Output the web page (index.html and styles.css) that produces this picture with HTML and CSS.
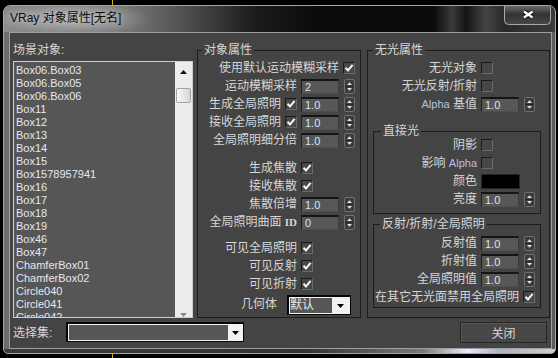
FILE: index.html
```html
<!DOCTYPE html>
<html lang="zh-CN">
<head>
<meta charset="utf-8">
<title>VRay 对象属性</title>
<link rel="stylesheet" href="styles.css">
</head>
<body>
<div class="window">
  <div class="titlebar">
    <span class="title">VRay 对象属性[无名]</span>
    <div class="close-x">
      <svg width="47" height="19" viewBox="0 0 47 19">
        <defs>
          <linearGradient id="cg" x1="0" y1="0" x2="0" y2="1">
            <stop offset="0" stop-color="#6a6a6a"/>
            <stop offset="0.45" stop-color="#333"/>
            <stop offset="1" stop-color="#474747"/>
          </linearGradient>
        </defs>
        <path d="M0.5 0 V14.5 A4 4 0 0 0 4.5 18.5 H42.5 A4 4 0 0 0 46.5 14.5 V0" fill="url(#cg)" stroke="#a8a8a8"/>
        <path d="M20 5.5 L28.5 11.5 M28.5 5.5 L20 11.5" stroke="#151515" stroke-width="4.2"/>
        <path d="M20 5.5 L28.5 11.5 M28.5 5.5 L20 11.5" stroke="#fff" stroke-width="2.2"/>
      </svg>
    </div>
  </div>
  <div class="client">
    <div class="main">
      <div class="scene">
        <div class="scene-label">场景对象:</div>
        <div class="listbox">
          <ul class="items">
            <li>Box06.Box03</li>
            <li>Box06.Box05</li>
            <li>Box06.Box06</li>
            <li>Box11</li>
            <li>Box12</li>
            <li>Box13</li>
            <li>Box14</li>
            <li>Box15</li>
            <li>Box1578957941</li>
            <li>Box16</li>
            <li>Box17</li>
            <li>Box18</li>
            <li>Box19</li>
            <li>Box46</li>
            <li>Box47</li>
            <li>ChamferBox01</li>
            <li>ChamferBox02</li>
            <li>Circle040</li>
            <li>Circle041</li>
            <li>Circle042</li>
          </ul>
          <div class="vscroll">
            <svg class="sc-up" width="7" height="4" viewBox="0 0 7 4"><path d="M0 4 H7 L3.5 0 Z" fill="#111"/></svg>
            <div class="thumb"></div>
            <svg class="sc-down" width="7" height="4" viewBox="0 0 7 4"><path d="M0 0 H7 L3.5 4 Z" fill="#8a8a8a"/></svg>
          </div>
        </div>
      </div>

      <fieldset class="group obj">
        <legend>对象属性</legend>
        <div class="rows">
          <span class="lbl to-c">使用默认运动模糊采样</span>
          <span class="cb col-c"><svg width="10" height="10" viewBox="0 0 10 10"><path d="M1.5 4.8 L4 7.5 L8.6 1.8" fill="none" stroke="#f4f4f4" stroke-width="2"/></svg></span>

          <span class="lbl to-b">运动模糊采样</span>
          <span class="field col-b">2</span>
          <span class="spin col-c"><svg width="11" height="15" viewBox="0 0 11 15"><rect x="0.5" y="0.5" width="10" height="14" rx="1.5" fill="#3c3c3c" stroke="#707070"/><path d="M1 7.5 H10" stroke="#262626"/><path d="M3 6 H8 L5.5 3.2 Z" fill="#e2e2e2"/><path d="M3 9 H8 L5.5 11.8 Z" fill="#e2e2e2"/></svg></span>

          <span class="lbl to-a">生成全局照明</span>
          <span class="cb col-a"><svg width="10" height="10" viewBox="0 0 10 10"><path d="M1.5 4.8 L4 7.5 L8.6 1.8" fill="none" stroke="#f4f4f4" stroke-width="2"/></svg></span>
          <span class="field col-b">1.0</span>
          <span class="spin col-c"><svg width="11" height="15" viewBox="0 0 11 15"><rect x="0.5" y="0.5" width="10" height="14" rx="1.5" fill="#3c3c3c" stroke="#707070"/><path d="M1 7.5 H10" stroke="#262626"/><path d="M3 6 H8 L5.5 3.2 Z" fill="#e2e2e2"/><path d="M3 9 H8 L5.5 11.8 Z" fill="#e2e2e2"/></svg></span>

          <span class="lbl to-a">接收全局照明</span>
          <span class="cb col-a"><svg width="10" height="10" viewBox="0 0 10 10"><path d="M1.5 4.8 L4 7.5 L8.6 1.8" fill="none" stroke="#f4f4f4" stroke-width="2"/></svg></span>
          <span class="field col-b">1.0</span>
          <span class="spin col-c"><svg width="11" height="15" viewBox="0 0 11 15"><rect x="0.5" y="0.5" width="10" height="14" rx="1.5" fill="#3c3c3c" stroke="#707070"/><path d="M1 7.5 H10" stroke="#262626"/><path d="M3 6 H8 L5.5 3.2 Z" fill="#e2e2e2"/><path d="M3 9 H8 L5.5 11.8 Z" fill="#e2e2e2"/></svg></span>

          <span class="lbl to-b">全局照明细分倍</span>
          <span class="field col-b">1.0</span>
          <span class="spin col-c"><svg width="11" height="15" viewBox="0 0 11 15"><rect x="0.5" y="0.5" width="10" height="14" rx="1.5" fill="#3c3c3c" stroke="#707070"/><path d="M1 7.5 H10" stroke="#262626"/><path d="M3 6 H8 L5.5 3.2 Z" fill="#e2e2e2"/><path d="M3 9 H8 L5.5 11.8 Z" fill="#e2e2e2"/></svg></span>
        </div>

        <div class="rows sec2">
          <span class="lbl to-b">生成焦散</span>
          <span class="cb col-b"><svg width="10" height="10" viewBox="0 0 10 10"><path d="M1.5 4.8 L4 7.5 L8.6 1.8" fill="none" stroke="#f4f4f4" stroke-width="2"/></svg></span>

          <span class="lbl to-b">接收焦散</span>
          <span class="cb col-b"><svg width="10" height="10" viewBox="0 0 10 10"><path d="M1.5 4.8 L4 7.5 L8.6 1.8" fill="none" stroke="#f4f4f4" stroke-width="2"/></svg></span>

          <span class="lbl to-b">焦散倍增</span>
          <span class="field col-b">1.0</span>
          <span class="spin col-c"><svg width="11" height="15" viewBox="0 0 11 15"><rect x="0.5" y="0.5" width="10" height="14" rx="1.5" fill="#3c3c3c" stroke="#707070"/><path d="M1 7.5 H10" stroke="#262626"/><path d="M3 6 H8 L5.5 3.2 Z" fill="#e2e2e2"/><path d="M3 9 H8 L5.5 11.8 Z" fill="#e2e2e2"/></svg></span>

          <span class="lbl to-b">全局照明曲面 <span class="id">ID</span></span>
          <span class="field col-b">0</span>
          <span class="spin col-c"><svg width="11" height="15" viewBox="0 0 11 15"><rect x="0.5" y="0.5" width="10" height="14" rx="1.5" fill="#3c3c3c" stroke="#707070"/><path d="M1 7.5 H10" stroke="#262626"/><path d="M3 6 H8 L5.5 3.2 Z" fill="#e2e2e2"/><path d="M3 9 H8 L5.5 11.8 Z" fill="#e2e2e2"/></svg></span>
        </div>

        <div class="rows sec3">
          <span class="lbl to-b">可见全局照明</span>
          <span class="cb col-b"><svg width="10" height="10" viewBox="0 0 10 10"><path d="M1.5 4.8 L4 7.5 L8.6 1.8" fill="none" stroke="#f4f4f4" stroke-width="2"/></svg></span>

          <span class="lbl to-b">可见反射</span>
          <span class="cb col-b"><svg width="10" height="10" viewBox="0 0 10 10"><path d="M1.5 4.8 L4 7.5 L8.6 1.8" fill="none" stroke="#f4f4f4" stroke-width="2"/></svg></span>

          <span class="lbl to-b">可见折射</span>
          <span class="cb col-b"><svg width="10" height="10" viewBox="0 0 10 10"><path d="M1.5 4.8 L4 7.5 L8.6 1.8" fill="none" stroke="#f4f4f4" stroke-width="2"/></svg></span>

          <span class="lbl to-a geo-lbl">几何体</span>
          <div class="combo geo">
            <span class="combo-text">默认</span>
            <span class="combo-btn"><svg width="7" height="4" viewBox="0 0 7 4"><path d="M0 0 H7 L3.5 4 Z" fill="#000"/></svg></span>
          </div>
        </div>
      </fieldset>

      <fieldset class="group matte">
        <legend>无光属性</legend>
        <div class="rows2 outer">
          <span class="lbl to-b">无光对象</span>
          <span class="cb col-b"></span>

          <span class="lbl to-b">无光反射/折射</span>
          <span class="cb col-b"></span>

          <span class="lbl to-b"><span class="alpha">Alpha</span> 基值</span>
          <span class="field col-b">1.0</span>
          <span class="spin col-c"><svg width="11" height="15" viewBox="0 0 11 15"><rect x="0.5" y="0.5" width="10" height="14" rx="1.5" fill="#3c3c3c" stroke="#707070"/><path d="M1 7.5 H10" stroke="#262626"/><path d="M3 6 H8 L5.5 3.2 Z" fill="#e2e2e2"/><path d="M3 9 H8 L5.5 11.8 Z" fill="#e2e2e2"/></svg></span>
        </div>

        <fieldset class="group sub direct">
          <legend>直接光</legend>
          <div class="rows2">
            <span class="lbl to-b">阴影</span>
            <span class="cb col-b"></span>

            <span class="lbl to-b">影响 <span class="alpha">Alpha</span></span>
            <span class="cb col-b"></span>

            <span class="lbl to-b">颜色</span>
            <span class="swatch col-b"></span>

            <span class="lbl to-b">亮度</span>
            <span class="field col-b">1.0</span>
            <span class="spin col-c"><svg width="11" height="15" viewBox="0 0 11 15"><rect x="0.5" y="0.5" width="10" height="14" rx="1.5" fill="#3c3c3c" stroke="#707070"/><path d="M1 7.5 H10" stroke="#262626"/><path d="M3 6 H8 L5.5 3.2 Z" fill="#e2e2e2"/><path d="M3 9 H8 L5.5 11.8 Z" fill="#e2e2e2"/></svg></span>
          </div>
        </fieldset>

        <fieldset class="group sub refl">
          <legend>反射/折射/全局照明</legend>
          <div class="rows2">
            <span class="lbl to-b">反射值</span>
            <span class="field col-b">1.0</span>
            <span class="spin col-c"><svg width="11" height="15" viewBox="0 0 11 15"><rect x="0.5" y="0.5" width="10" height="14" rx="1.5" fill="#3c3c3c" stroke="#707070"/><path d="M1 7.5 H10" stroke="#262626"/><path d="M3 6 H8 L5.5 3.2 Z" fill="#e2e2e2"/><path d="M3 9 H8 L5.5 11.8 Z" fill="#e2e2e2"/></svg></span>

            <span class="lbl to-b">折射值</span>
            <span class="field col-b">1.0</span>
            <span class="spin col-c"><svg width="11" height="15" viewBox="0 0 11 15"><rect x="0.5" y="0.5" width="10" height="14" rx="1.5" fill="#3c3c3c" stroke="#707070"/><path d="M1 7.5 H10" stroke="#262626"/><path d="M3 6 H8 L5.5 3.2 Z" fill="#e2e2e2"/><path d="M3 9 H8 L5.5 11.8 Z" fill="#e2e2e2"/></svg></span>

            <span class="lbl to-b">全局照明值</span>
            <span class="field col-b">1.0</span>
            <span class="spin col-c"><svg width="11" height="15" viewBox="0 0 11 15"><rect x="0.5" y="0.5" width="10" height="14" rx="1.5" fill="#3c3c3c" stroke="#707070"/><path d="M1 7.5 H10" stroke="#262626"/><path d="M3 6 H8 L5.5 3.2 Z" fill="#e2e2e2"/><path d="M3 9 H8 L5.5 11.8 Z" fill="#e2e2e2"/></svg></span>

            <span class="lbl to-c">在其它无光面禁用全局照明</span>
            <span class="cb col-c"><svg width="10" height="10" viewBox="0 0 10 10"><path d="M1.5 4.8 L4 7.5 L8.6 1.8" fill="none" stroke="#f4f4f4" stroke-width="2"/></svg></span>
          </div>
        </fieldset>
      </fieldset>
    </div>

    <div class="bottom">
      <span class="sel-label">选择集:</span>
      <div class="combo selset">
        <span class="combo-text"></span>
        <span class="combo-btn"><svg width="7" height="4" viewBox="0 0 7 4"><path d="M0 0 H7 L3.5 4 Z" fill="#000"/></svg></span>
      </div>
      <button class="btn">关闭</button>
    </div>
  </div>
</div>
</body>
</html>
```

FILE: styles.css
```css
* { box-sizing: border-box; }

html, body { margin: 0; padding: 0; }

body {
  width: 558px;
  height: 358px;
  overflow: hidden;
  padding: 5px 0 0 3px;
  background:
    linear-gradient(to right, transparent 112px, #c9b400 112px, #c9b400 113px, transparent 113px),
    #000;
  font-family: "Liberation Sans", "Noto Sans CJK SC", sans-serif;
  font-size: 12px;
  color: #d6d6d6;
}

.window {
  width: 553px;
  height: 349px;
  border: 1px solid #a4a4a4;
  border-radius: 7px 7px 5px 5px;
  overflow: hidden;
  display: flex;
  flex-direction: column;
  background:
    linear-gradient(to right, #3c3c3c 0, #333 55%, #7a7a7a 76%, #e6eeff 84%, #aab2c0 90%, #d0d0d0 100%) bottom / 100% 4px no-repeat,
    linear-gradient(to right, #6e6e6e 0, #595959 30%, #3a3a3a 60%, #2c2c2c 85%, #5e5e5e 100%);
}

.titlebar {
  height: 26px;
  flex: none;
  display: flex;
  align-items: flex-start;
  background:
    radial-gradient(ellipse 80px 15px at 68px 13px, rgba(215, 215, 215, 0.55), rgba(215, 215, 215, 0) 100%),
    linear-gradient(to right, #8a8a8a 0, #808080 110px, #505050 180px, #1c1c1c 250px, #0a0a0a 320px, #0c0c0c 430px, #3a3a3a 448px, #151515 462px, #444 482px, #2a2a2a 500px, #3a3a3a 100%);
}

.title {
  padding: 2px 0 0 6px;
  line-height: 20px;
  font-size: 12px;
  color: #0e0e0e;
  text-shadow: 0 0 6px rgba(235, 235, 235, 0.7);
  white-space: nowrap;
}

.close-x {
  margin-left: auto;
  margin-right: 4px;
  height: 19px;
}

.close-x svg { display: block; }

.client {
  margin: 0 3px 4px 5px;
  height: 317px;
  flex: none;
  border: 1px solid #9e9e9e;
  background: #444444;
  display: flex;
  flex-direction: column;
}

.main {
  margin-top: 11px;
  height: 274px;
  padding: 0 1px 0 3px;
  display: grid;
  grid-template-columns: 180px 164px 185px;
  column-gap: 4px;
}

/* scene list */
.scene {
  display: flex;
  flex-direction: column;
}

.scene-label {
  height: 17px;
  line-height: 12px;
  white-space: nowrap;
}

.listbox {
  height: 257px;
  border: 1px solid #cfcfcf;
  background: #565656;
  display: flex;
  overflow: hidden;
}

.items {
  flex: 1;
  min-width: 0;
  list-style: none;
  margin: 0;
  padding: 2px 0 0 2px;
  overflow: hidden;
}

.items li {
  height: 13px;
  line-height: 13px;
  font-size: 11px;
  color: #e4e8f0;
  white-space: nowrap;
}

.vscroll {
  width: 17px;
  flex: none;
  background: #ececec;
  display: flex;
  flex-direction: column;
  align-items: center;
}

.vscroll svg { display: block; }

.sc-up { margin-top: 8px; }

.thumb {
  margin-top: 14px;
  width: 15px;
  height: 15px;
  border: 1px solid #a2a2a2;
  border-radius: 2px;
  background: linear-gradient(to right, #f8f8f8, #d6d6d6);
}

.sc-down { margin-top: auto; margin-bottom: 0; }

/* group boxes */
.group {
  margin: 0;
  min-width: 0;
  border: 1px solid #1c1c1c;
}

.group > legend {
  padding: 0 2px;
  font-size: 12px;
  line-height: 12px;
  color: #d6d6d6;
  white-space: nowrap;
}

.obj { padding: 3px 5px 0 4px; }

.matte {
  margin-left: 2px;
  padding: 3px 8px 0 5px;
}

.rows {
  display: grid;
  grid-template-columns: minmax(0, 1fr) 12px 38px 12px;
  grid-auto-rows: 18px;
  column-gap: 4px;
  align-items: center;
}

.rows2 {
  display: grid;
  grid-template-columns: minmax(0, 1fr) 38px 12px;
  grid-auto-rows: 18px;
  column-gap: 4px;
  align-items: center;
}

.rows2.outer { padding-right: 6px; }

.sec2 { margin-top: 10px; }

.sec3 {
  margin-top: 8px;
  grid-template-rows: 18px 18px 18px 22px;
}

.lbl {
  text-align: right;
  white-space: nowrap;
  font-size: 12px;
  line-height: 18px;
}

.rows .to-a { grid-column: 1 / 2; }
.rows .to-b { grid-column: 1 / 3; }
.rows .to-c { grid-column: 1 / 4; }
.rows .col-a { grid-column: 2; }
.rows .col-b { grid-column: 3; }
.rows .col-c { grid-column: 4; }

.rows2 .to-b { grid-column: 1 / 2; }
.rows2 .to-c { grid-column: 1 / 3; }
.rows2 .col-b { grid-column: 2; }
.rows2 .col-c { grid-column: 3; }

.geo-lbl { padding-right: 4px; }

.id {
  font-family: "Liberation Serif", serif;
  font-size: 11px;
  font-weight: bold;
  color: #cfd6e6;
}

.alpha {
  font-size: 11px;
  color: #b2c2e2;
}

.cb {
  width: 12px;
  height: 12px;
  background: #474747;
  border: 1px solid;
  border-color: #1a1a1a #6a6a6a #6a6a6a #1a1a1a;
  display: flex;
  align-items: center;
  justify-content: center;
}

.cb svg { display: block; }

.field {
  width: 38px;
  height: 15px;
  background: #575757;
  border-top: 2px solid #151515;
  border-left: 1px solid #1e1e1e;
  border-right: 1px solid #3a3a3a;
  border-bottom: 1px solid #4e4e4e;
  padding-left: 3px;
  font-size: 11px;
  line-height: 12px;
  color: #dae2f2;
  white-space: nowrap;
}

.spin {
  width: 11px;
  height: 15px;
  justify-self: end;
}

.spin svg { display: block; }

.swatch {
  width: 39px;
  height: 15px;
  background: #000;
  border: 1px solid #262626;
}

/* sub groups */
.sub {
  padding: 0 5px 5px 0;
}

.direct { margin-top: 12px; }
.direct > legend { margin-left: 7px; }
.direct .rows2 { margin-top: -1px; }

.refl {
  margin-top: 4px;
  padding: 4px 5px 1px 0;
}
.refl > legend { margin-left: 6px; }

/* combo boxes */
.combo {
  display: flex;
  border: 1px solid #050505;
  border-top-width: 2px;
  border-left-width: 2px;
  padding: 1px;
  background: #f2f2f2;
}

.combo-text {
  flex: 1;
  background: #565656;
  font-size: 12px;
  line-height: 14px;
  color: #e8e8e8;
  white-space: nowrap;
  overflow: hidden;
}

.combo-btn {
  width: 14px;
  flex: none;
  display: flex;
  align-items: center;
  justify-content: center;
}

.combo-btn svg { display: block; }

.geo {
  grid-column: 2 / 5;
  width: 64px;
  height: 20px;
  margin-left: 2px;
  align-self: end;
}

.geo .combo-btn { width: 17px; }

/* bottom row */
.bottom {
  margin-top: 4px;
  height: 21px;
  padding: 0 4px 0 3px;
  display: flex;
  align-items: center;
}

.sel-label {
  width: 53px;
  white-space: nowrap;
  line-height: 12px;
}

.selset {
  width: 178px;
  height: 20px;
  margin-top: -1px;
}

.btn {
  margin-left: auto;
  width: 87px;
  height: 21px;
  padding: 0;
  background: #474747;
  border: 1px solid #262626;
  box-shadow: inset 1px 1px 0 #565656;
  font-family: "Liberation Sans", "Noto Sans CJK SC", sans-serif;
  font-size: 12px;
  color: #d6d6d6;
}
```
